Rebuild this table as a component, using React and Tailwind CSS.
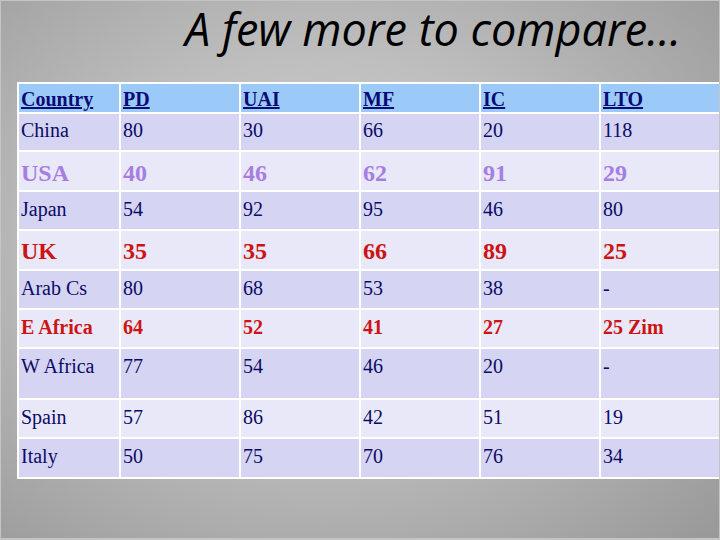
import React from "react";

const rows = [
  { cells: ["China", "80", "30", "66", "20", "118"], h: "h-[36px]", bg: "bg-[#d5d4f3]", kind: "normal", pt: "pt-[4px]" },
  { cells: ["USA", "40", "46", "62", "91", "29"], h: "h-[38px]", bg: "bg-[#e9e8f8]", kind: "purple", pt: "pt-[6px]" },
  { cells: ["Japan", "54", "92", "95", "46", "80"], h: "h-[37px]", bg: "bg-[#d5d4f3]", kind: "normal", pt: "pt-[5px]" },
  { cells: ["UK", "35", "35", "66", "89", "25"], h: "h-[38px]", bg: "bg-[#e9e8f8]", kind: "redbig", pt: "pt-[5px]" },
  { cells: ["Arab Cs", "80", "68", "53", "38", "-"], h: "h-[37px]", bg: "bg-[#d5d4f3]", kind: "normal", pt: "pt-[5px]" },
  { cells: ["E Africa", "64", "52", "41", "27", "25 Zim"], h: "h-[37px]", bg: "bg-[#e9e8f8]", kind: "red", pt: "pt-[5px]" },
  { cells: ["W Africa", "77", "54", "46", "20", "-"], h: "h-[49px]", bg: "bg-[#d5d4f3]", kind: "normal", pt: "pt-[5px]" },
  { cells: ["Spain", "57", "86", "42", "51", "19"], h: "h-[37px]", bg: "bg-[#e9e8f8]", kind: "normal", pt: "pt-[5px]" },
  { cells: ["Italy", "50", "75", "70", "76", "34"], h: "h-[38px]", bg: "bg-[#d5d4f3]", kind: "normal", pt: "pt-[5px]" },
];

const kindClass = {
  normal: "text-[20px] text-[#0b0b66]",
  purple: "text-[24px] font-bold text-[#a67ee2]",
  redbig: "text-[24px] font-bold text-[#cc1414]",
  red: "text-[20px] font-bold text-[#cc1414]",
};

const headers = ["Country", "PD", "UAI", "MF", "IC", "LTO"];

export default function App() {
  return (
    <div className="w-[720px] h-[540px] overflow-hidden border-l border-t border-r border-b-2 border-[#c4c4c4] bg-[radial-gradient(ellipse_at_45%_45%,#d4d4d4_0%,#bebebe_45%,#989898_100%)]">
      <div className="h-[81px] pl-[184px] pt-0">
        <h1
          className="text-[45px] leading-[56px] italic text-black whitespace-nowrap"
          style={{ fontFamily: '"Open Sans", sans-serif' }}
        >
          A few more to compare…
        </h1>
      </div>
      <div
        className="ml-[16px] grid w-max grid-cols-[100px_118px_118px_118px_118px_119px] gap-[2px] bg-white p-[2px] pr-0"
        style={{ fontFamily: '"Liberation Serif", "Times New Roman", serif' }}
      >
        {headers.map((h) => (
          <div key={h} className="h-[28px] bg-[#9ccaf8] pl-[2px] pt-[4px] leading-[22px]">
            <span className="text-[20px] font-bold underline text-[#0b0b77] decoration-[1.5px]">{h}</span>
          </div>
        ))}
        {rows.map((r) =>
          r.cells.map((c, i) => (
            <div key={r.cells[0] + i} className={`${r.h} ${r.bg} ${r.pt} pl-[2px] leading-tight ${kindClass[r.kind]}`}>
              {c}
            </div>
          ))
        )}
      </div>
    </div>
  );
}
